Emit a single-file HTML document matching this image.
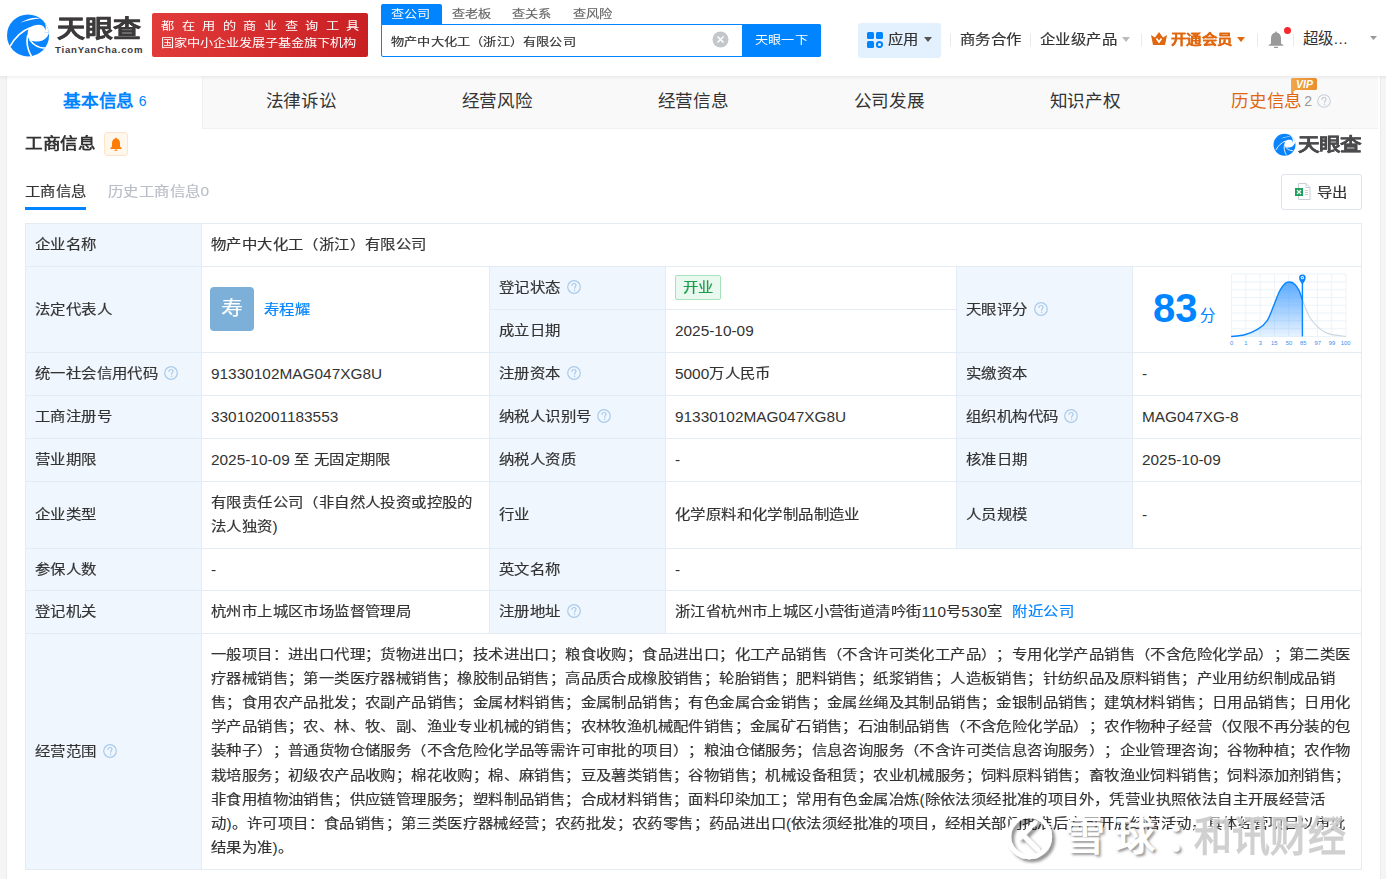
<!DOCTYPE html>
<html lang="zh-CN"><head><meta charset="utf-8">
<style>
*{margin:0;padding:0;box-sizing:border-box}
html,body{width:1386px;height:879px;overflow:hidden;background:#f5f5f5;font-family:"Liberation Sans",sans-serif;color:#333;text-spacing-trim:space-all}
.abs{position:absolute}
.nw{white-space:nowrap}
#hdr{position:absolute;left:0;top:0;width:1386px;height:76px;background:#fff}
#shadow{position:absolute;left:0;top:76px;width:1386px;height:4px;background:linear-gradient(rgba(0,0,0,.055),rgba(0,0,0,0));z-index:5}
#card{position:absolute;left:7px;top:76px;width:1373px;height:803px;background:#fff;box-shadow:-1px 0 0 #ebebeb,1px 0 0 #ebebeb}
.tab{position:absolute;top:0;height:53px;width:196px;line-height:50px;text-align:center;font-size:17.6px;color:#333;letter-spacing:-0.4px}
.c{position:absolute;border:1px solid #e3ecf5;display:flex;align-items:center;padding-left:9px;font-size:15.4px;line-height:24px;white-space:nowrap;color:#333;background:#fff}
.c.lbl{background:#eff6fd}
.k{letter-spacing:0.4px;display:inline-block;transform:scaleY(0.86);-webkit-text-stroke:0.2px currentColor}
.q{display:inline-block;position:relative;width:14px;height:14px;border:1px solid #b7d0ea;border-radius:50%;margin-left:7px;top:0px}
.q:after{content:"?";position:absolute;left:0;top:0;width:12px;height:12px;line-height:12px;text-align:center;font-size:10px;color:#9cbde0}
.qs{display:inline-block;vertical-align:-1px;margin-left:6px}
</style></head><body>
<div id="hdr">
  <svg class="abs" style="left:4px;top:11px" width="48" height="48" viewBox="0 0 879 879">
    <defs><clipPath id="cc"><circle cx="440" cy="447" r="385"/></clipPath></defs>
    <g clip-path="url(#cc)">
    <rect width="879" height="879" fill="#0a84fc"/>
    <path d="M300,215 C420,145 560,105 670,135 C540,150 420,175 300,215Z" fill="#fff"/>
    <path d="M640,100 C740,150 800,270 742,388 L900,395 L900,0 L640,0Z" fill="#fff"/>
    <path d="M460,310 C560,240 700,230 738,300 C762,340 755,372 742,388 L900,395 L900,415 L820,415 C780,525 650,590 495,545 C450,515 428,470 432,440 C432,380 440,345 460,310Z" fill="#fff"/>
    <path d="M105,655 C200,480 330,360 480,305" stroke="#fff" stroke-width="30" fill="none"/>
    <path d="M436,440 C406,560 426,700 505,835" stroke="#fff" stroke-width="30" fill="none"/>
    <path d="M465,520 C540,625 640,685 765,680" stroke="#fff" stroke-width="30" fill="none"/>
    </g>
  </svg>
  <div class="abs nw" style="left:56.5px;top:15.3px;font-size:28px;line-height:34px;font-weight:bold;color:#3d3a3b;-webkit-text-stroke:0.45px #3d3a3b;transform:scale(1.0,0.857);transform-origin:0 0">天眼查</div>
  <div class="abs nw" style="left:55px;top:44px;font-size:9.6px;line-height:12px;font-weight:bold;color:#3d3a3b;letter-spacing:0.8px">TianYanCha.com</div>
  <div class="abs" style="left:152px;top:13px;width:216px;height:44px;border-radius:2px;background:linear-gradient(100deg,#e23b3b,#c81f22)"></div>
  <div class="abs nw" style="left:161px;top:18px;font-size:13.2px;line-height:18px;color:#fff;letter-spacing:7.6px;transform:scaleY(0.86)">都在用的商业查询工具</div>
  <div class="abs nw" style="left:161px;top:35px;font-size:13.2px;line-height:18px;color:#fff;transform:scaleY(0.86)">国家中小企业发展子基金旗下机构</div>
  <div class="abs" style="left:381px;top:4px;width:61px;height:21px;background:#0084ff;border-radius:2px 2px 0 0"></div>
  <div class="abs nw" style="left:391px;top:5px;font-size:13.2px;line-height:20px;color:#fff;letter-spacing:.2px;transform:scaleY(0.86)">查公司</div>
  <div class="abs nw" style="left:452px;top:5px;font-size:13.2px;line-height:20px;color:#666;letter-spacing:.2px;transform:scaleY(0.86);-webkit-text-stroke:0.2px currentColor">查老板</div>
  <div class="abs nw" style="left:512px;top:5px;font-size:13.2px;line-height:20px;color:#666;letter-spacing:.2px;transform:scaleY(0.86);-webkit-text-stroke:0.2px currentColor">查关系</div>
  <div class="abs nw" style="left:573px;top:5px;font-size:13.2px;line-height:20px;color:#666;letter-spacing:.2px;transform:scaleY(0.86);-webkit-text-stroke:0.2px currentColor">查风险</div>
  <div class="abs" style="left:381px;top:24px;width:440px;height:33px;border:1px solid #0084ff;border-radius:0 2px 2px 2px;background:#fff"></div>
  <div class="abs nw" style="left:391px;top:32.5px;font-size:13.2px;line-height:20px;color:#333;letter-spacing:.2px;transform:scaleY(0.86);-webkit-text-stroke:0.2px currentColor">物产中大化工（浙江）有限公司</div>
  <svg class="abs" style="left:712px;top:31px" width="17" height="17" viewBox="0 0 17 17"><circle cx="8.5" cy="8.5" r="8" fill="#c3c7cc"/><path d="M5.5 5.5L11.5 11.5M11.5 5.5L5.5 11.5" stroke="#fff" stroke-width="1.5"/></svg>
  <div class="abs" style="left:742px;top:24px;width:79px;height:33px;background:#0084ff;border-radius:0 2px 2px 0"></div>
  <div class="abs nw" style="left:755px;top:31px;font-size:13.2px;line-height:20px;color:#fff;letter-spacing:.2px;transform:scaleY(0.86)">天眼一下</div>
  <div class="abs" style="left:858px;top:23px;width:83px;height:35px;background:#e3f0fd;border-radius:3px"></div>
  <svg class="abs" style="left:867px;top:32px" width="16" height="16" viewBox="0 0 16 16"><rect x="0" y="0" width="7" height="7" rx="1.5" fill="#0084ff"/><rect x="9" y="0" width="7" height="7" rx="1.5" fill="#0084ff"/><rect x="0" y="9" width="7" height="7" rx="1.5" fill="#0084ff"/><circle cx="12.5" cy="12.5" r="2.6" fill="none" stroke="#0084ff" stroke-width="2"/></svg>
  <div class="abs nw" style="left:888px;top:30px;font-size:15.4px;line-height:20px;color:#333;letter-spacing:.4px;transform:scaleY(0.86);-webkit-text-stroke:0.2px currentColor">应用</div>
  <svg class="abs" style="left:924px;top:37px" width="8" height="5"><path d="M0 0H8L4 5z" fill="#555"/></svg>
  <div class="abs" style="left:950px;top:34px;width:1px;height:12px;background:#e8e8e8"></div>
  <div class="abs nw" style="left:960px;top:30px;font-size:15.4px;line-height:20px;color:#333;letter-spacing:.4px;transform:scaleY(0.86);-webkit-text-stroke:0.2px currentColor">商务合作</div>
  <div class="abs" style="left:1030px;top:34px;width:1px;height:12px;background:#e8e8e8"></div>
  <div class="abs nw" style="left:1040px;top:30px;font-size:15.4px;line-height:20px;color:#333;letter-spacing:.4px;transform:scaleY(0.86);-webkit-text-stroke:0.2px currentColor">企业级产品</div>
  <svg class="abs" style="left:1122px;top:37px" width="8" height="5"><path d="M0 0H8L4 5z" fill="#bbb"/></svg>
  <div class="abs" style="left:1141px;top:34px;width:1px;height:12px;background:#e8e8e8"></div>
  <svg class="abs" style="left:1151px;top:32px" width="16" height="13" viewBox="0 0 16 13"><path d="M0 3L4 5.5L8 0L12 5.5L16 3L14 13H2z" fill="#e0670f"/><path d="M5.5 6.5L8 10L10.5 6.5" stroke="#fff" stroke-width="1.6" fill="none"/></svg>
  <div class="abs nw" style="left:1171px;top:30px;font-size:15.4px;line-height:20px;color:#e0670f;font-weight:bold;letter-spacing:.4px;transform:scaleY(0.86);-webkit-text-stroke:0.2px currentColor">开通会员</div>
  <svg class="abs" style="left:1237px;top:37px" width="8" height="5"><path d="M0 0H8L4 5z" fill="#e0670f"/></svg>
  <div class="abs" style="left:1257px;top:34px;width:1px;height:12px;background:#e8e8e8"></div>
  <svg class="abs" style="left:1268px;top:31px" width="16" height="17" viewBox="0 0 16 17"><path d="M8 0.5C8.6 .5 8.8 1 8.8 1.6C11.6 2.2 13 4.6 13 7.5V12.5L15.5 14.2V14.8H0.5V14.2L3 12.5V7.5C3 4.6 4.4 2.2 7.2 1.6C7.2 1 7.4 .5 8 .5z" fill="#9a9a9a"/><rect x="6" y="15.8" width="4" height="1.2" fill="#9a9a9a"/></svg>
  <div class="abs" style="left:1284px;top:27px;width:7px;height:7px;border-radius:50%;background:#f5282d"></div>
  <div class="abs" style="left:1293px;top:34px;width:1px;height:12px;background:#e8e8e8"></div>
  <div class="abs nw" style="left:1303px;top:29px;font-size:15.4px;line-height:20px;color:#333;letter-spacing:.4px">超级...</div>
  <svg class="abs" style="left:1370px;top:36px" width="7" height="4"><path d="M0 0H7L3.5 4z" fill="#999"/></svg>
</div>
<div id="shadow"></div>
<div id="card">
  <div class="abs" style="left:0;top:0;width:1371px;height:53px;background:#f9f9f9;border-bottom:1px solid #f1f1f1"></div>
  <div class="abs" style="left:0;top:0;width:195px;height:53px;background:#fff"></div>
  <div class="abs" style="left:195px;top:0;width:1px;height:53px;background:#f0f0f0"></div>
    <div class="tab" style="left:0;color:#0084ff;font-weight:bold">基本信息<span style="font-size:14px;font-weight:normal;margin-left:5px;vertical-align:1px;letter-spacing:0">6</span></div>
  <div class="tab" style="left:196px">法律诉讼</div>
  <div class="tab" style="left:392px">经营风险</div>
  <div class="tab" style="left:588px">经营信息</div>
  <div class="tab" style="left:784px">公司发展</div>
  <div class="tab" style="left:980px">知识产权</div>
  <div class="tab" style="left:1176px;color:#e0670f">历史信息<span style="font-size:14px;color:#999;margin-left:2.5px;vertical-align:1px;letter-spacing:0">2</span><svg width="14" height="14" viewBox="0 0 14 14" style="margin-left:4.5px;vertical-align:-1px"><circle cx="7" cy="7" r="6.3" fill="none" stroke="#c8d0da" stroke-width="1.1"/><path d="M5 5.4C5 4.2 5.9 3.5 7 3.5C8.1 3.5 9 4.2 9 5.3C9 6.5 7.6 6.8 7.6 8.2" fill="none" stroke="#c0c8d2" stroke-width="1.1" stroke-linecap="round"/><circle cx="7.6" cy="10.2" r=".7" fill="#c0c8d2"/></svg></div>
  <svg class="abs" style="left:1283px;top:2px" width="28" height="16" viewBox="0 0 28 16"><defs><linearGradient id="vg" x1="0" x2="1"><stop offset="0" stop-color="#f2a748"/><stop offset="1" stop-color="#ea8e2c"/></linearGradient></defs><path d="M2.5 0H25.5Q27 0 27 1.5V10.5Q27 12 25.5 12H5.5L1 15.8V1.5Q1 0 2.5 0Z" fill="url(#vg)"/><text x="14.5" y="10" text-anchor="middle" font-family="Liberation Sans,sans-serif" font-weight="bold" font-style="italic" font-size="10.5" fill="#fff">VIP</text></svg>
</div>
<div class="abs nw" style="left:25px;top:131px;font-size:17.6px;line-height:26px;font-weight:bold;color:#333;letter-spacing:-0.4px;transform:scaleY(0.88)">工商信息</div>
<div class="abs" style="left:104px;top:132px;width:24px;height:24px;background:#fff6ec;border:1px solid #ffe4c9;border-radius:3px"></div>
<svg class="abs" style="left:110px;top:137px" width="12" height="14" viewBox="0 0 12 14"><path d="M6 0.5C6.5 .5 6.7 .9 6.7 1.4C8.9 1.9 10 3.8 10 6.2V9.6L11.6 11V12H0.4V11L2 9.6V6.2C2 3.8 3.1 1.9 5.3 1.4C5.3 .9 5.5 .5 6 .5z" fill="#ff7d00"/><rect x="4.5" y="12.6" width="3" height="1.2" rx=".6" fill="#ff7d00"/></svg>
<svg class="abs" style="left:1273px;top:133px" width="23" height="23" viewBox="0 0 879 879">
  <defs><clipPath id="cc2"><circle cx="440" cy="447" r="420"/></clipPath></defs>
  <g clip-path="url(#cc2)">
  <rect width="879" height="879" fill="#0a84fc"/>
  <path d="M310,212 C420,150 560,110 670,140 C540,145 420,170 310,212Z" fill="#fff"/>
  <path d="M620,60 C730,150 790,270 742,385 L900,390 L900,0 L620,0Z" fill="#fff"/>
  <path d="M470,305 C560,245 700,235 735,300 C760,340 755,370 742,385 L900,390 L900,412 L822,412 C780,520 650,585 500,540 C455,510 435,470 440,440 C440,380 450,340 470,305Z" fill="#fff"/>
  <path d="M110,650 C200,480 330,360 480,305" stroke="#fff" stroke-width="34" fill="none"/>
  <path d="M440,440 C410,560 430,700 505,830" stroke="#fff" stroke-width="34" fill="none"/>
  <path d="M470,520 C540,620 640,680 760,675" stroke="#fff" stroke-width="34" fill="none"/>
  </g>
</svg>
<div class="abs nw" style="left:1298px;top:134px;font-size:21px;line-height:26px;font-weight:bold;color:#4b4b4d;-webkit-text-stroke:0.3px #4b4b4d;transform:scale(1.03,0.86);transform-origin:0 0;letter-spacing:-0.5px">天眼查</div>
<div class="abs nw" style="left:25px;top:181px;font-size:15.4px;line-height:22px;color:#333;letter-spacing:0.4px;transform:scaleY(0.86);-webkit-text-stroke:0.2px currentColor">工商信息</div>
<div class="abs" style="left:25px;top:207px;width:61px;height:3px;background:#0084ff"></div>
<div class="abs nw" style="left:108px;top:181px;font-size:15.4px;line-height:22px;color:#b9bec7;letter-spacing:0.4px;transform:scaleY(0.86);-webkit-text-stroke:0.2px currentColor">历史工商信息<span style="letter-spacing:0">0</span></div>
<div class="abs" style="left:1281px;top:174px;width:81px;height:36px;border:1px solid #dfe3ea;border-radius:3px;background:#fff"></div>
<svg class="abs" style="left:1295px;top:183px" width="16" height="17" viewBox="0 0 16 17"><path d="M3.5 .5H11L15 4.5V16.5H3.5z" fill="#fff" stroke="#c9ced6" stroke-width="1"/><path d="M11 .5V4.5H15" fill="none" stroke="#c9ced6"/><rect x="0" y="5" width="8" height="8" fill="#1aa05a"/><path d="M2 7L6 11M6 7L2 11" stroke="#fff" stroke-width="1.2"/><path d="M10 7.5h3M10 9.5h3M10 11.5h3" stroke="#c9ced6"/></svg>
<div class="abs nw" style="left:1317px;top:182px;font-size:15.4px;line-height:22px;color:#333;letter-spacing:.4px;transform:scaleY(0.86);-webkit-text-stroke:0.2px currentColor">导出</div>
<div class="c lbl" style="left:25px;top:223px;width:177px;height:44px;"><div><span class="k">企业名称</span></div></div>
<div class="c" style="left:201px;top:223px;width:1161px;height:44px;"><div><span class="k">物产中大化工（浙江）有限公司</span></div></div>
<div class="c lbl" style="left:25px;top:266px;width:177px;height:87px;"><div><span class="k">法定代表人</span></div></div>
<div class="c" style="left:201px;top:266px;width:289px;height:87px;"><div><span style="display:inline-block;vertical-align:middle;position:relative;left:-1px;top:-1px;width:44px;height:44px;border-radius:4px;background:#7cb0d9;color:#fff;font-size:22px;line-height:44px;text-align:center"><span class="k">寿</span></span><span style="color:#0084ff;margin-left:9px;vertical-align:middle"><span class="k">寿程耀</span></span></div></div>
<div class="c lbl" style="left:489px;top:266px;width:177px;height:44px;"><div><span class="k">登记状态</span><svg class="qs" width="14" height="14" viewBox="0 0 14 14"><circle cx="7" cy="7" r="6.3" fill="none" stroke="#a9cbec" stroke-width="1.2"/><path d="M5 5.4C5 4.2 5.9 3.5 7 3.5C8.1 3.5 9 4.2 9 5.3C9 6.5 7.6 6.8 7.6 8.2" fill="none" stroke="#a9cbec" stroke-width="1.2" stroke-linecap="round"/><circle cx="7.6" cy="10.2" r=".75" fill="#a9cbec"/></svg></div></div>
<div class="c" style="left:665px;top:266px;width:292px;height:44px;"><div><span style="display:inline-block;position:relative;top:-1px;height:25px;line-height:23px;padding:0 6.5px;border:1px solid #a6e2bb;background:#e9f9ef;color:#1a9e4b;border-radius:2px"><span class="k">开业</span></span></div></div>
<div class="c lbl" style="left:489px;top:309px;width:177px;height:44px;"><div><span class="k">成立日期</span></div></div>
<div class="c" style="left:665px;top:309px;width:292px;height:44px;"><div>2025-10-09</div></div>
<div class="c lbl" style="left:956px;top:266px;width:177px;height:87px;"><div><span class="k">天眼评分</span><svg class="qs" width="14" height="14" viewBox="0 0 14 14"><circle cx="7" cy="7" r="6.3" fill="none" stroke="#a9cbec" stroke-width="1.2"/><path d="M5 5.4C5 4.2 5.9 3.5 7 3.5C8.1 3.5 9 4.2 9 5.3C9 6.5 7.6 6.8 7.6 8.2" fill="none" stroke="#a9cbec" stroke-width="1.2" stroke-linecap="round"/><circle cx="7.6" cy="10.2" r=".75" fill="#a9cbec"/></svg></div></div>
<div class="c" style="left:1132px;top:266px;width:230px;height:87px;"><div></div></div>
<div class="c lbl" style="left:25px;top:352px;width:177px;height:44px;"><div><span class="k">统一社会信用代码</span><svg class="qs" width="14" height="14" viewBox="0 0 14 14"><circle cx="7" cy="7" r="6.3" fill="none" stroke="#a9cbec" stroke-width="1.2"/><path d="M5 5.4C5 4.2 5.9 3.5 7 3.5C8.1 3.5 9 4.2 9 5.3C9 6.5 7.6 6.8 7.6 8.2" fill="none" stroke="#a9cbec" stroke-width="1.2" stroke-linecap="round"/><circle cx="7.6" cy="10.2" r=".75" fill="#a9cbec"/></svg></div></div>
<div class="c" style="left:201px;top:352px;width:289px;height:44px;"><div>91330102MAG047XG8U</div></div>
<div class="c lbl" style="left:489px;top:352px;width:177px;height:44px;"><div><span class="k">注册资本</span><svg class="qs" width="14" height="14" viewBox="0 0 14 14"><circle cx="7" cy="7" r="6.3" fill="none" stroke="#a9cbec" stroke-width="1.2"/><path d="M5 5.4C5 4.2 5.9 3.5 7 3.5C8.1 3.5 9 4.2 9 5.3C9 6.5 7.6 6.8 7.6 8.2" fill="none" stroke="#a9cbec" stroke-width="1.2" stroke-linecap="round"/><circle cx="7.6" cy="10.2" r=".75" fill="#a9cbec"/></svg></div></div>
<div class="c" style="left:665px;top:352px;width:292px;height:44px;"><div>5000<span class="k">万人民币</span></div></div>
<div class="c lbl" style="left:956px;top:352px;width:177px;height:44px;"><div><span class="k">实缴资本</span></div></div>
<div class="c" style="left:1132px;top:352px;width:230px;height:44px;"><div>-</div></div>
<div class="c lbl" style="left:25px;top:395px;width:177px;height:44px;"><div><span class="k">工商注册号</span></div></div>
<div class="c" style="left:201px;top:395px;width:289px;height:44px;"><div>330102001183553</div></div>
<div class="c lbl" style="left:489px;top:395px;width:177px;height:44px;"><div><span class="k">纳税人识别号</span><svg class="qs" width="14" height="14" viewBox="0 0 14 14"><circle cx="7" cy="7" r="6.3" fill="none" stroke="#a9cbec" stroke-width="1.2"/><path d="M5 5.4C5 4.2 5.9 3.5 7 3.5C8.1 3.5 9 4.2 9 5.3C9 6.5 7.6 6.8 7.6 8.2" fill="none" stroke="#a9cbec" stroke-width="1.2" stroke-linecap="round"/><circle cx="7.6" cy="10.2" r=".75" fill="#a9cbec"/></svg></div></div>
<div class="c" style="left:665px;top:395px;width:292px;height:44px;"><div>91330102MAG047XG8U</div></div>
<div class="c lbl" style="left:956px;top:395px;width:177px;height:44px;"><div><span class="k">组织机构代码</span><svg class="qs" width="14" height="14" viewBox="0 0 14 14"><circle cx="7" cy="7" r="6.3" fill="none" stroke="#a9cbec" stroke-width="1.2"/><path d="M5 5.4C5 4.2 5.9 3.5 7 3.5C8.1 3.5 9 4.2 9 5.3C9 6.5 7.6 6.8 7.6 8.2" fill="none" stroke="#a9cbec" stroke-width="1.2" stroke-linecap="round"/><circle cx="7.6" cy="10.2" r=".75" fill="#a9cbec"/></svg></div></div>
<div class="c" style="left:1132px;top:395px;width:230px;height:44px;"><div>MAG047XG-8</div></div>
<div class="c lbl" style="left:25px;top:438px;width:177px;height:44px;"><div><span class="k">营业期限</span></div></div>
<div class="c" style="left:201px;top:438px;width:289px;height:44px;"><div>2025-10-09 <span class="k">至</span> <span class="k">无固定期限</span></div></div>
<div class="c lbl" style="left:489px;top:438px;width:177px;height:44px;"><div><span class="k">纳税人资质</span></div></div>
<div class="c" style="left:665px;top:438px;width:292px;height:44px;"><div>-</div></div>
<div class="c lbl" style="left:956px;top:438px;width:177px;height:44px;"><div><span class="k">核准日期</span></div></div>
<div class="c" style="left:1132px;top:438px;width:230px;height:44px;"><div>2025-10-09</div></div>
<div class="c lbl" style="left:25px;top:481px;width:177px;height:68px;"><div><span class="k">企业类型</span></div></div>
<div class="c" style="left:201px;top:481px;width:289px;height:68px;"><div><div style="line-height:24.2px;white-space:normal"><span class="k">有限责任公司（非自然人投资或控股的</span><br><span class="k">法人独资</span>)</div></div></div>
<div class="c lbl" style="left:489px;top:481px;width:177px;height:68px;"><div><span class="k">行业</span></div></div>
<div class="c" style="left:665px;top:481px;width:292px;height:68px;"><div><span class="k">化学原料和化学制品制造业</span></div></div>
<div class="c lbl" style="left:956px;top:481px;width:177px;height:68px;"><div><span class="k">人员规模</span></div></div>
<div class="c" style="left:1132px;top:481px;width:230px;height:68px;"><div>-</div></div>
<div class="c lbl" style="left:25px;top:548px;width:177px;height:43px;"><div><span class="k">参保人数</span></div></div>
<div class="c" style="left:201px;top:548px;width:289px;height:43px;"><div>-</div></div>
<div class="c lbl" style="left:489px;top:548px;width:177px;height:43px;"><div><span class="k">英文名称</span></div></div>
<div class="c" style="left:665px;top:548px;width:697px;height:43px;"><div>-</div></div>
<div class="c lbl" style="left:25px;top:590px;width:177px;height:44px;"><div><span class="k">登记机关</span></div></div>
<div class="c" style="left:201px;top:590px;width:289px;height:44px;"><div><span class="k">杭州市上城区市场监督管理局</span></div></div>
<div class="c lbl" style="left:489px;top:590px;width:177px;height:44px;"><div><span class="k">注册地址</span><svg class="qs" width="14" height="14" viewBox="0 0 14 14"><circle cx="7" cy="7" r="6.3" fill="none" stroke="#a9cbec" stroke-width="1.2"/><path d="M5 5.4C5 4.2 5.9 3.5 7 3.5C8.1 3.5 9 4.2 9 5.3C9 6.5 7.6 6.8 7.6 8.2" fill="none" stroke="#a9cbec" stroke-width="1.2" stroke-linecap="round"/><circle cx="7.6" cy="10.2" r=".75" fill="#a9cbec"/></svg></div></div>
<div class="c" style="left:665px;top:590px;width:697px;height:44px;"><div><span class="k">浙江省杭州市上城区小营街道清吟街</span>110<span class="k">号</span>530<span class="k">室</span><span style="color:#0084ff;margin-left:10px"><span class="k">附近公司</span></span></div></div>
<div class="c lbl" style="left:25px;top:633px;width:177px;height:237px;"><div><span class="k">经营范围</span><svg class="qs" width="14" height="14" viewBox="0 0 14 14"><circle cx="7" cy="7" r="6.3" fill="none" stroke="#a9cbec" stroke-width="1.2"/><path d="M5 5.4C5 4.2 5.9 3.5 7 3.5C8.1 3.5 9 4.2 9 5.3C9 6.5 7.6 6.8 7.6 8.2" fill="none" stroke="#a9cbec" stroke-width="1.2" stroke-linecap="round"/><circle cx="7.6" cy="10.2" r=".75" fill="#a9cbec"/></svg></div></div>
<div class="c" style="left:201px;top:633px;width:1161px;height:237px;"><div><div style="line-height:24.2px"><span class="k">一般项目：进出口代理；货物进出口；技术进出口；粮食收购；食品进出口；化工产品销售（不含许可类化工产品）；专用化学产品销售（不含危险化学品）；第二类医</span><br><span class="k">疗器械销售；第一类医疗器械销售；橡胶制品销售；高品质合成橡胶销售；轮胎销售；肥料销售；纸浆销售；人造板销售；针纺织品及原料销售；产业用纺织制成品销</span><br><span class="k">售；食用农产品批发；农副产品销售；金属材料销售；金属制品销售；有色金属合金销售；金属丝绳及其制品销售；金银制品销售；建筑材料销售；日用品销售；日用化</span><br><span class="k">学产品销售；农、林、牧、副、渔业专业机械的销售；农林牧渔机械配件销售；金属矿石销售；石油制品销售（不含危险化学品）；农作物种子经营（仅限不再分装的包</span><br><span class="k">装种子）；普通货物仓储服务（不含危险化学品等需许可审批的项目）；粮油仓储服务；信息咨询服务（不含许可类信息咨询服务）；企业管理咨询；谷物种植；农作物</span><br><span class="k">栽培服务；初级农产品收购；棉花收购；棉、麻销售；豆及薯类销售；谷物销售；机械设备租赁；农业机械服务；饲料原料销售；畜牧渔业饲料销售；饲料添加剂销售；</span><br><span class="k">非食用植物油销售；供应链管理服务；塑料制品销售；合成材料销售；面料印染加工；常用有色金属冶炼</span>(<span class="k">除依法须经批准的项目外，凭营业执照依法自主开展经营活</span><br><span class="k">动</span>)<span class="k">。许可项目：食品销售；第三类医疗器械经营；农药批发；农药零售；药品进出口</span>(<span class="k">依法须经批准的项目，经相关部门批准后方可开展经营活动，具体经营项目以审批</span><br><span class="k">结果为准</span>)<span class="k">。</span></div></div></div>
<svg class="abs" style="left:1225px;top:268px" width="130" height="80" viewBox="0 0 1386 853">
<defs><linearGradient id="gf" x1="0" y1="0" x2="0" y2="1"><stop offset="0" stop-color="#3d9bff" stop-opacity=".85"/><stop offset="1" stop-color="#3d9bff" stop-opacity=".12"/></linearGradient></defs>
<g stroke="#edf3fa" stroke-width="11" fill="none"><path d="M70.0,65 V730"/><path d="M222.5,65 V730"/><path d="M375.0,65 V730"/><path d="M527.5,65 V730"/><path d="M680.0,65 V730"/><path d="M832.5,65 V730"/><path d="M985.0,65 V730"/><path d="M1137.5,65 V730"/><path d="M1290.0,65 V730"/><path d="M70,65.0 H1290"/><path d="M70,148.1 H1290"/><path d="M70,231.2 H1290"/><path d="M70,314.3 H1290"/><path d="M70,397.4 H1290"/><path d="M70,480.5 H1290"/><path d="M70,563.6 H1290"/><path d="M70,646.7 H1290"/><path d="M70,729.8 H1290"/></g>
<path d="M65,730 C89.2,727.0 162.5,725.0 210,712 C257.5,699.0 310.0,677.3 350,652 C390.0,626.7 421.7,602.0 450,560 C478.3,518.0 498.3,451.7 520,400 C541.7,348.3 560.0,289.2 580,250 C600.0,210.8 622.5,181.7 640,165 C657.5,148.3 668.3,149.2 685,150 C701.7,150.8 722.5,155.0 740,170 C757.5,185.0 775.8,211.7 790,240 C804.2,268.3 806.7,293.3 825,340 L825,730 Z" fill="url(#gf)"/>
<path d="M825,340 C843.3,386.7 872.5,471.7 900,520 C927.5,568.3 956.7,600.0 990,630 C1023.3,660.0 1050.0,683.3 1100,700 C1150.0,716.7 1258.3,725.0 1290,730" fill="none" stroke="#c9d6e3" stroke-width="12"/>
<path d="M65,730 C89.2,727.0 162.5,725.0 210,712 C257.5,699.0 310.0,677.3 350,652 C390.0,626.7 421.7,602.0 450,560 C478.3,518.0 498.3,451.7 520,400 C541.7,348.3 560.0,289.2 580,250 C600.0,210.8 622.5,181.7 640,165 C657.5,148.3 668.3,149.2 685,150 C701.7,150.8 722.5,155.0 740,170 C757.5,185.0 775.8,211.7 790,240 C804.2,268.3 806.7,293.3 825,340" fill="none" stroke="#0a84ff" stroke-width="15"/>
<path d="M825,120 V730" stroke="#0a84ff" stroke-width="15"/>
<path d="M825,175 C800,140 790,125 790,103 A35,35 0 1 1 860,103 C860,125 850,140 825,175Z" fill="#0a84ff"/>
<circle cx="825" cy="103" r="17" fill="#fff"/><circle cx="825" cy="103" r="8" fill="#0a84ff"/>
<g fill="#3b8ef0" font-size="62" font-family="Liberation Sans, sans-serif"><text x="70" y="818" text-anchor="middle">0</text><text x="222" y="818" text-anchor="middle">1</text><text x="378" y="818" text-anchor="middle">3</text><text x="525" y="818" text-anchor="middle">15</text><text x="683" y="818" text-anchor="middle">50</text><text x="835" y="818" text-anchor="middle">85</text><text x="988" y="818" text-anchor="middle">97</text><text x="1140" y="818" text-anchor="middle">99</text><text x="1285" y="818" text-anchor="middle">100</text></g>
</svg>
<div class="abs nw" style="left:1153px;top:285px;font-size:40px;line-height:46px;font-weight:bold;color:#0084ff">83</div>
<div class="abs nw" style="left:1200px;top:306px;font-size:15.4px;line-height:20px;color:#0084ff">分</div>
<svg class="abs" style="left:998px;top:807px" width="66" height="60" viewBox="0 0 66 60">
<defs><filter id="ws" x="-30%" y="-30%" width="160%" height="160%"><feGaussianBlur in="SourceAlpha" stdDeviation="1.6"/><feOffset dx="2.5" dy="2.5"/><feComponentTransfer><feFuncA type="linear" slope="0.45"/></feComponentTransfer><feMerge><feMergeNode/><feMergeNode in="SourceGraphic"/></feMerge></filter></defs>
<g filter="url(#ws)" fill="none" stroke="#fff" stroke-width="4.6" stroke-linecap="round">
<circle cx="31.3" cy="29.5" r="20.5"/>
<path d="M37 15.5 L22.5 30.5"/>
<path d="M25.5 28.5 L40 43"/>
</g>
</svg>
<div class="abs nw wm" style="left:1065px;top:811px;font-size:40px;line-height:50px;font-weight:bold;color:#fff;text-shadow:2px 2px 2.5px rgba(70,70,70,.55);letter-spacing:10.4px">雪球<span style="letter-spacing:0">：</span></div>
<div class="abs nw wm" style="left:1194px;top:810px;font-size:38px;line-height:50px;font-weight:bold;color:rgba(196,196,196,.8);text-shadow:-1.5px -1.5px 0 rgba(255,255,255,.8);transform:scaleY(1.075);transform-origin:0 0">和讯财经</div>
</body></html>
